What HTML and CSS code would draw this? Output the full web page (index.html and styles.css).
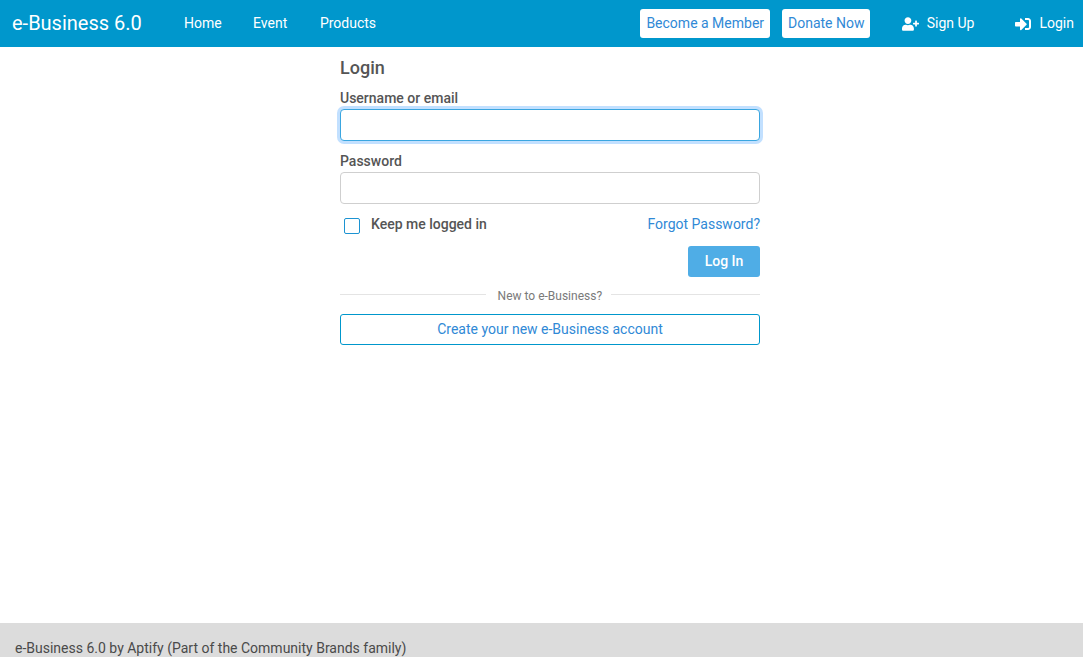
FILE: index.html
```html
<!DOCTYPE html>
<html lang="en">
<head>
<meta charset="utf-8">
<title>Login</title>
<link rel="stylesheet" href="styles.css">
</head>
<body>
<header class="navbar">
  <a class="brand" href="#">e-Business 6.0</a>
  <nav class="menu">
    <a href="#">Home</a>
    <a href="#">Event</a>
    <a href="#">Products</a>
  </nav>
  <div class="actions">
    <a class="pill pill-member" href="#">Become a Member</a>
    <a class="pill pill-donate" href="#">Donate Now</a>
    <a class="user-link signup" href="#">
      <svg class="icon-user" viewBox="0 0 640 512" aria-hidden="true"><path fill="#fff" d="M624 208h-64v-64c0-8.800-7.200-16-16-16h-32c-8.800 0-16 7.200-16 16v64h-64c-8.800 0-16 7.200-16 16v32c0 8.800 7.200 16 16 16h64v64c0 8.800 7.200 16 16 16h32c8.800 0 16-7.200 16-16v-64h64c8.800 0 16-7.200 16-16v-32c0-8.800-7.200-16-16-16zM224 256c70.700 0 128-57.300 128-128S294.700 0 224 0 96 57.300 96 128s57.300 128 128 128zm89.600 32h-16.700c-22.200 10.200-46.900 16-72.900 16s-50.600-5.800-72.900-16h-16.700C60.200 288 0 348.200 0 422.400V464c0 26.500 21.500 48 48 48h352c26.500 0 48-21.500 48-48v-41.600c0-74.200-60.200-134.400-134.400-134.400z"/></svg>
      <span>Sign Up</span>
    </a>
    <a class="user-link login" href="#">
      <svg class="icon-login" viewBox="0 0 512 512" aria-hidden="true"><path fill="#fff" d="M416 448h-84c-6.600 0-12-5.400-12-12v-40c0-6.600 5.400-12 12-12h84c17.700 0 32-14.300 32-32V160c0-17.700-14.300-32-32-32h-84c-6.600 0-12-5.400-12-12V76c0-6.600 5.400-12 12-12h84c53 0 96 43 96 96v192c0 53-43 96-96 96zm-47-201L201 79c-15-15-41-4.500-41 17v96H24c-13.300 0-24 10.700-24 24v96c0 13.300 10.700 24 24 24h136v96c0 21.500 26 32 41 17l168-168c9.300-9.400 9.300-24.600 0-34z"/></svg>
      <span>Login</span>
    </a>
  </div>
</header>

<main class="content">
  <form class="login-form">
    <h1 class="title">Login</h1>
    <label class="field-label" for="username">Username or email</label>
    <input class="field field-focus" id="username" type="text">
    <label class="field-label label-password" for="password">Password</label>
    <input class="field" id="password" type="password">
    <div class="options">
      <label class="keep"><span class="check"></span><span>Keep me logged in</span></label>
      <a class="forgot" href="#">Forgot Password?</a>
    </div>
    <div class="submit-row"><button class="submit" type="button">Log In</button></div>
    <div class="divider"><span>New to e-Business?</span></div>
    <a class="create" href="#">Create your new e-Business account</a>
  </form>
</main>

<footer class="footer">e-Business 6.0 by Aptify (Part of the Community Brands family)</footer>
</body>
</html>
```
FILE: styles.css
```css
* { box-sizing: border-box; }
html, body { height: 100%; }
body {
  margin: 0;
  height: 657px;
  overflow: hidden;
  display: flex;
  flex-direction: column;
  font-family: Roboto, "Liberation Sans", sans-serif;
  font-size: 14px;
  color: #555;
  background: #fff;
}
a { text-decoration: none; }

.navbar {
  height: 47px;
  flex: none;
  display: flex;
  align-items: center;
  background: #0097cc;
  padding-left: 12px;
  color: #fff;
}
.brand { color: #fff; font-size: 20px; width: 172px; padding-bottom: 2px; }
.menu { display: flex; gap: 32px; padding-bottom: 2px; }
.menu a { color: #fff; font-size: 14px; }
.menu a:nth-child(2) { margin: 0 .6px 0 -.6px; }
.actions { margin-left: auto; display: flex; align-items: center; }
.pill {
  display: flex;
  align-items: center;
  justify-content: center;
  height: 29px;
  padding-bottom: 2px;
  background: #fff;
  border-radius: 3px;
  color: #3089d6;
  font-size: 14px;
}
.pill-member { width: 130px; padding-left: 1px; }
.pill-donate { width: 88px; margin-left: 12px; padding-left: 1px; }
.user-link { display: flex; align-items: center; color: #fff; font-size: 14px; }
.user-link span { padding-bottom: 2px; }
.signup { margin-left: 32px; }
.login { margin-left: 41px; margin-right: 9px; }
.icon-user { width: 17px; height: 14px; margin-right: 8px; margin-top: 1px; }
.icon-login { width: 16px; height: 16px; margin-right: 8px; }

.content { flex: 1; padding: 10px 0 0 340px; }
.login-form { width: 420px; display: flex; flex-direction: column; }
.title { margin: 0; font-size: 18px; font-weight: 500; line-height: 22px; }
.field-label { font-weight: 500; line-height: 16px; margin-top: 11px; }
.label-password { margin-top: 12px; }
.field {
  display: block;
  width: 100%;
  height: 32px;
  margin-top: 3px;
  border: 1px solid #cfcfcf;
  border-radius: 4px;
  background: #fff;
  outline: none;
}
.field-focus { border-color: #3aa6e0; box-shadow: 0 0 0 3px #c2e0ff; }
.options { display: flex; justify-content: space-between; align-items: center; margin-top: 12px; height: 16px; }
.keep { display: flex; align-items: center; font-weight: 500; padding-left: 4px; }
.check {
  width: 16px;
  height: 16px;
  margin-right: 11px;
  margin-top: 3px;
  border: 1px solid #1c93d2;
  border-radius: 2px;
  background: #fff;
}
.forgot { color: #3089d6; }
.submit-row { display: flex; justify-content: flex-end; margin-top: 14px; }
.submit {
  width: 72px;
  height: 31px;
  padding: 0 0 2px;
  border: 0;
  border-radius: 3px;
  background: #4fade6;
  color: #fff;
  font: 500 14px Roboto, "Liberation Sans", sans-serif;
}
.divider { display: flex; align-items: center; margin-top: 9px; height: 16px; font-size: 12px; color: #7a7a7a; }
.divider span { padding-top: 3px; margin: 0 9px 0 12px; position: relative; left: -.4px; }
.divider::before { content: ""; flex: none; width: 146px; height: 1px; background: #e4e4e4; margin-top: 1px; }
.divider::after { content: ""; flex: 1; height: 1px; background: #e4e4e4; margin-top: 1px; }
.create {
  display: flex;
  align-items: center;
  justify-content: center;
  height: 31px;
  margin-top: 12px;
  padding-bottom: 2px;
  border: 1px solid #0097cc;
  border-radius: 3px;
  color: #3089d6;
}

.footer {
  flex: none;
  height: 34px;
  padding: 17px 0 0 15px;
  line-height: 16px;
  background: #dcdcdc;
  color: #4a4a4a;
}
```
